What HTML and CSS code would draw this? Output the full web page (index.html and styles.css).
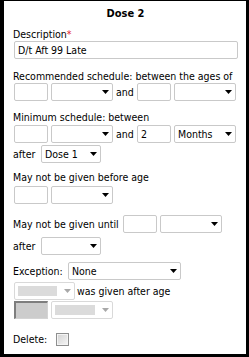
FILE: index.html
```html
<!DOCTYPE html>
<html>
<head>
	<title>Dose 2</title>
	<meta charset="UTF-8">
	<link rel="stylesheet" href="styles.css">
</head>
<body>
	<div class="panel">
		<h1 class="title">Dose 2</h1>

		<div class="label gap-8">Description<span class="req">*</span></div>
		<input class="text wide gap-1" type="text" value="D/t Aft 99 Late">

		<div class="label gap-11">Recommended schedule: between the ages of</div>
		<div class="row">
			<input class="text num" type="text">
			<div class="select unit"><select><option></option></select><svg class="arrow" viewBox="0 0 7 4"><path d="M0 0h7L3.5 4z"/></svg></div>
			<span class="and">and</span>
			<input class="text num" type="text">
			<div class="select unit"><select><option></option></select><svg class="arrow" viewBox="0 0 7 4"><path d="M0 0h7L3.5 4z"/></svg></div>
		</div>

		<div class="label gap-10">Minimum schedule: between</div>
		<div class="row gap-1">
			<input class="text num" type="text">
			<div class="select unit"><select><option></option></select><svg class="arrow" viewBox="0 0 7 4"><path d="M0 0h7L3.5 4z"/></svg></div>
			<span class="and">and</span>
			<input class="text num" type="text" value="2">
			<div class="select unit"><select><option>Months</option></select><svg class="arrow" viewBox="0 0 7 4"><path d="M0 0h7L3.5 4z"/></svg></div>
		</div>
		<div class="row gap-2">
			<span class="after">after</span>
			<div class="select dose"><select><option>Dose 1</option></select><svg class="arrow" viewBox="0 0 7 4"><path d="M0 0h7L3.5 4z"/></svg></div>
		</div>

		<div class="label gap-8">May not be given before age</div>
		<div class="row gap-2">
			<input class="text num" type="text">
			<div class="select unit"><select><option></option></select><svg class="arrow" viewBox="0 0 7 4"><path d="M0 0h7L3.5 4z"/></svg></div>
		</div>

		<div class="row gap-11">
			<span class="until">May not be given until</span>
			<input class="text num" type="text">
			<div class="select unit"><select><option></option></select><svg class="arrow" viewBox="0 0 7 4"><path d="M0 0h7L3.5 4z"/></svg></div>
		</div>
		<div class="row gap-4">
			<span class="after">after</span>
			<div class="select dose"><select><option></option></select><svg class="arrow" viewBox="0 0 7 4"><path d="M0 0h7L3.5 4z"/></svg></div>
		</div>

		<div class="row gap-7">
			<span class="exc">Exception:</span>
			<div class="select wide-select"><select><option>None</option></select><svg class="arrow" viewBox="0 0 7 4"><path d="M0 0h7L3.5 4z"/></svg></div>
		</div>
		<div class="row gap-2">
			<div class="select off short"><select disabled><option></option></select><svg class="arrow" viewBox="0 0 7 4"><path d="M0 0h7L3.5 4z"/></svg></div>
			<span class="given">was given after age</span>
		</div>
		<div class="row gap-1">
			<input class="text num off" type="text" disabled>
			<div class="select off unit"><select disabled><option></option></select><svg class="arrow" viewBox="0 0 7 4"><path d="M0 0h7L3.5 4z"/></svg></div>
		</div>

		<div class="row gap-14 check-row">
			<span class="del">Delete:</span>
			<input class="check" type="checkbox">
		</div>
	</div>
</body>
</html>
```

FILE: styles.css
```css
body {
	margin: 0;
	background-color: #000;
	color: #000;
	font-family: Tahoma, "DejaVu Sans Condensed", sans-serif;
	font-size: 10.5px;
	line-height: 13px;
}

.panel {
	background-color: #fff;
	margin: 1px 3px 0 4px;
	height: 353px;
	box-sizing: border-box;
	padding: 6px 9px 0 10px;
}

.title {
	margin: 0;
	font-size: 11px;
	font-weight: bold;
	line-height: 13px;
	text-align: center;
}

.label {
	margin-left: -1px;
	white-space: nowrap;
}

.req {
	color: #e0202a;
}

.gap-1 { margin-top: 1px; }
.gap-2 { margin-top: 2px; }
.gap-4 { margin-top: 4px; }
.gap-7 { margin-top: 7px; }
.gap-8 { margin-top: 8px; }
.gap-10 { margin-top: 10px; }
.gap-11 { margin-top: 11px; }
.gap-14 { margin-top: 14px; }

.row {
	display: flex;
	align-items: center;
	gap: 3px;
	height: 18px;
	white-space: nowrap;
}

.text {
	display: block;
	box-sizing: border-box;
	height: 18px;
	margin: 0;
	padding: 0 3px;
	border: 1px solid #c9c9c9;
	border-radius: 2px;
	font: inherit;
	color: #000;
	background: #fff;
	outline: none;
}

.wide {
	width: 224px;
}

.num {
	width: 34px;
	flex: none;
}

.text.off {
	background-color: #ccc;
	border-color: #7e7e7e #d4d4d4 #d4d4d4 #7e7e7e;
	border-width: 2px 1px 1px 2px;
	border-radius: 0;
}

.select {
	position: relative;
	flex: none;
	height: 18px;
}

.select select {
	appearance: none;
	-webkit-appearance: none;
	box-sizing: border-box;
	width: 100%;
	height: 100%;
	margin: 0;
	padding: 0 12px 0 3px;
	border: 1px solid #c9c9c9;
	border-radius: 2px;
	background: #fff;
	font: inherit;
	color: #000;
	outline: none;
}

.select .arrow {
	position: absolute;
	right: 4px;
	top: 7px;
	width: 7px;
	height: 4px;
	fill: #000;
	pointer-events: none;
}

.unit { width: 62px; }
.dose { width: 60px; }
.wide-select { width: 113px; }
.short { width: 61px; }

.select.off select {
	background: linear-gradient(to right, #ccc 0, #ccc 100%) no-repeat 3px 3px / calc(100% - 20px) 10px, #fff;
}

.select.off .arrow {
	fill: #a8a8a8;
}

.and {
	width: 18px;
	flex: none;
}

.after {
	margin-left: -1px;
	margin-right: 1px;
	width: 24px;
	flex: none;
}

.until {
	margin-left: -1px;
	margin-right: 1px;
	width: 106px;
	flex: none;
}

.exc {
	margin-left: -1px;
	margin-right: 1px;
	width: 51px;
	flex: none;
}

.given {
	margin-left: -1px;
}

.check-row {
	height: 13px;
}

.del {
	margin-left: -1px;
	margin-right: 1px;
	width: 39px;
	flex: none;
}

.check {
	appearance: none;
	-webkit-appearance: none;
	box-sizing: border-box;
	width: 13px;
	height: 13px;
	margin: 0;
	border: 1px solid #8e8f8f;
	background: linear-gradient(135deg, #d2d2d2, #f6f6f6);
	box-shadow: inset 0 0 0 1px #f4f4f4;
}
```
